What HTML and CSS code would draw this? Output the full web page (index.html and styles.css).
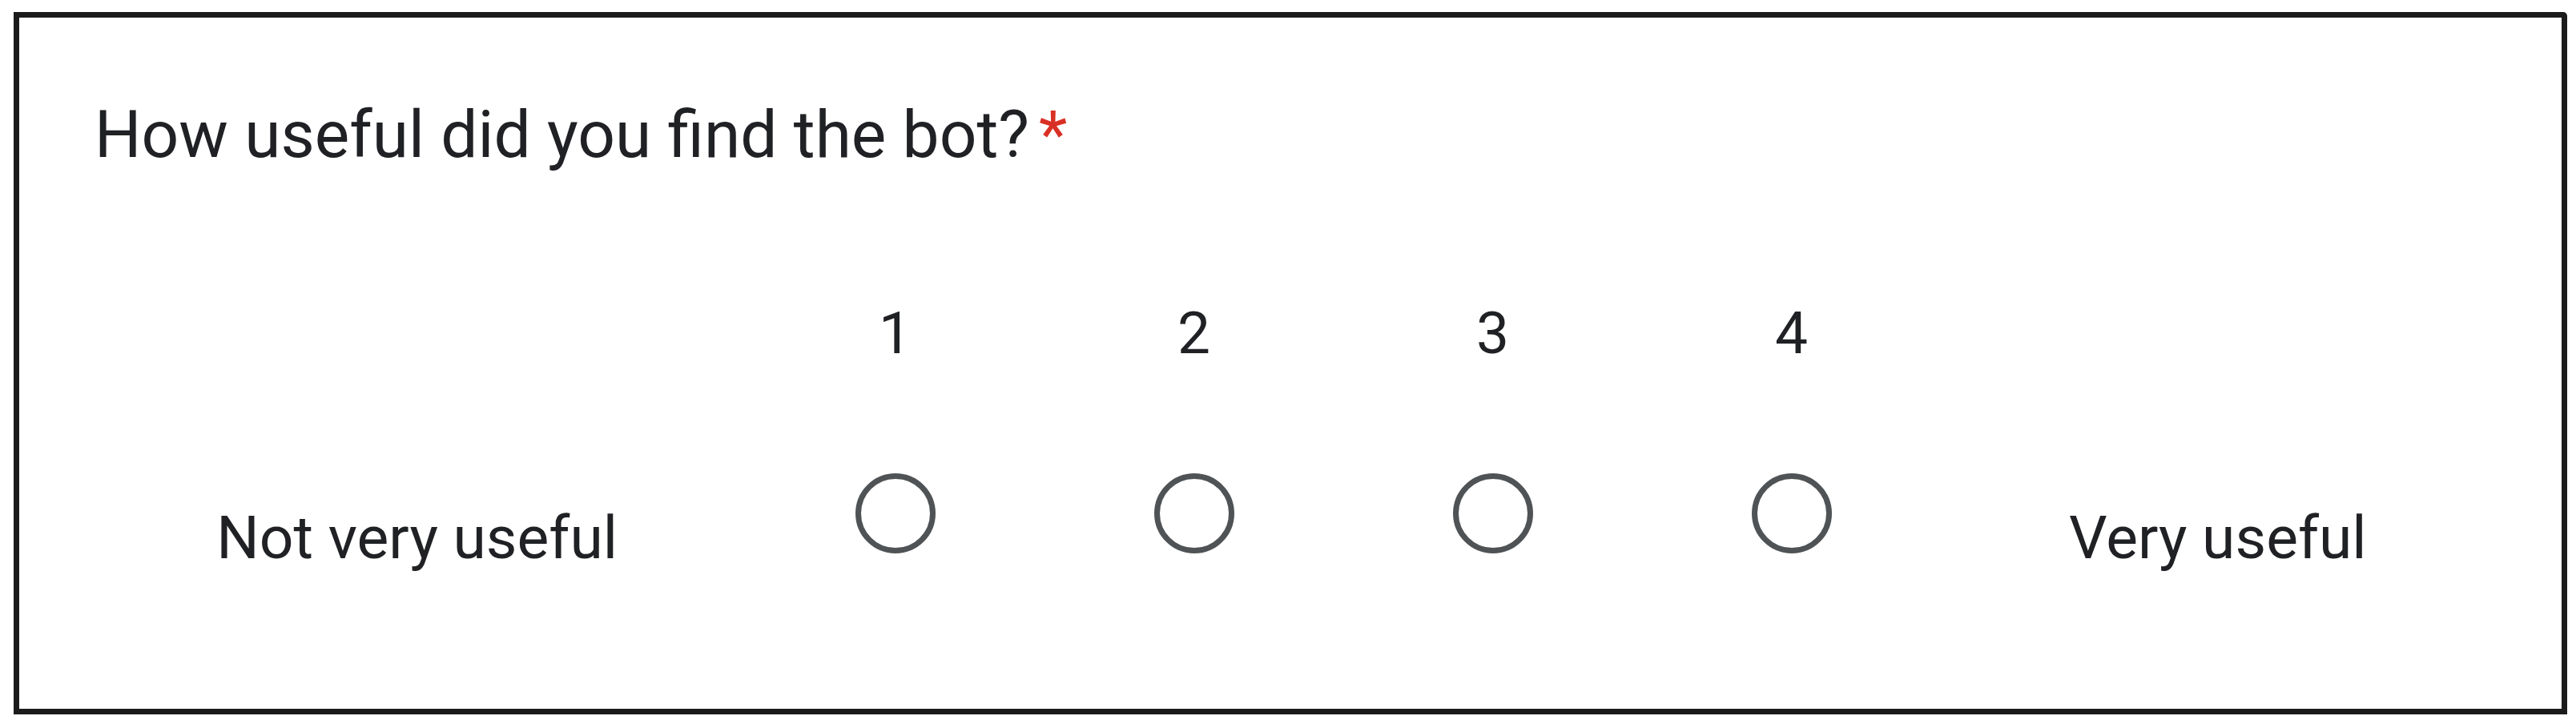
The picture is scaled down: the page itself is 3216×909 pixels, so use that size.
FILE: index.html
```html
<!DOCTYPE html>
<html lang="en">
<head>
<meta charset="utf-8">
<title>How useful did you find the bot?</title>
<link rel="stylesheet" href="styles.css">
</head>
<body>
  <div class="card">
    <div class="question">How useful did you find the bot?<span class="req">*</span></div>
    <div class="scale">
      <div class="label label-low">Not very useful</div>
      <div class="option">
        <div class="num">1</div>
        <div class="radio"></div>
      </div>
      <div class="option">
        <div class="num">2</div>
        <div class="radio"></div>
      </div>
      <div class="option">
        <div class="num">3</div>
        <div class="radio"></div>
      </div>
      <div class="option">
        <div class="num">4</div>
        <div class="radio"></div>
      </div>
      <div class="label label-high">Very useful</div>
    </div>
  </div>
</body>
</html>
```

FILE: styles.css
```css
html, body {
  margin: 0;
  padding: 0;
  background: #ffffff;
}

body {
  font-family: Roboto, "Liberation Sans", Arial, sans-serif;
  color: #202124;
}

.card {
  box-sizing: border-box;
  margin: 15px 11px 0 17px;
  height: 877px;
  border: 7px solid #1b1b1b;
  border-top-right-radius: 5px;
  padding: 105px 0 0 0;
  background: #ffffff;
}

.question {
  font-size: 82px;
  line-height: 1;
  padding-left: 94px;
  white-space: nowrap;
}

.req {
  color: #d93025;
  margin-left: 12px;
}

.scale {
  display: flex;
  align-items: flex-start;
  margin-top: 171px;
}

.label {
  font-size: 75px;
  line-height: 1;
  white-space: nowrap;
  padding-top: 254px;
}

.label-low {
  width: 907px;
  box-sizing: border-box;
  text-align: right;
  padding-right: 160px;
}

.label-high {
  padding-left: 160px;
}

.option {
  width: 373px;
  display: flex;
  flex-direction: column;
  align-items: center;
}

.num {
  font-size: 73px;
  line-height: 1;
  height: 73px;
}

.radio {
  box-sizing: border-box;
  width: 100px;
  height: 100px;
  margin-top: 138px;
  border: 7px solid #505355;
  border-radius: 50%;
}
```
